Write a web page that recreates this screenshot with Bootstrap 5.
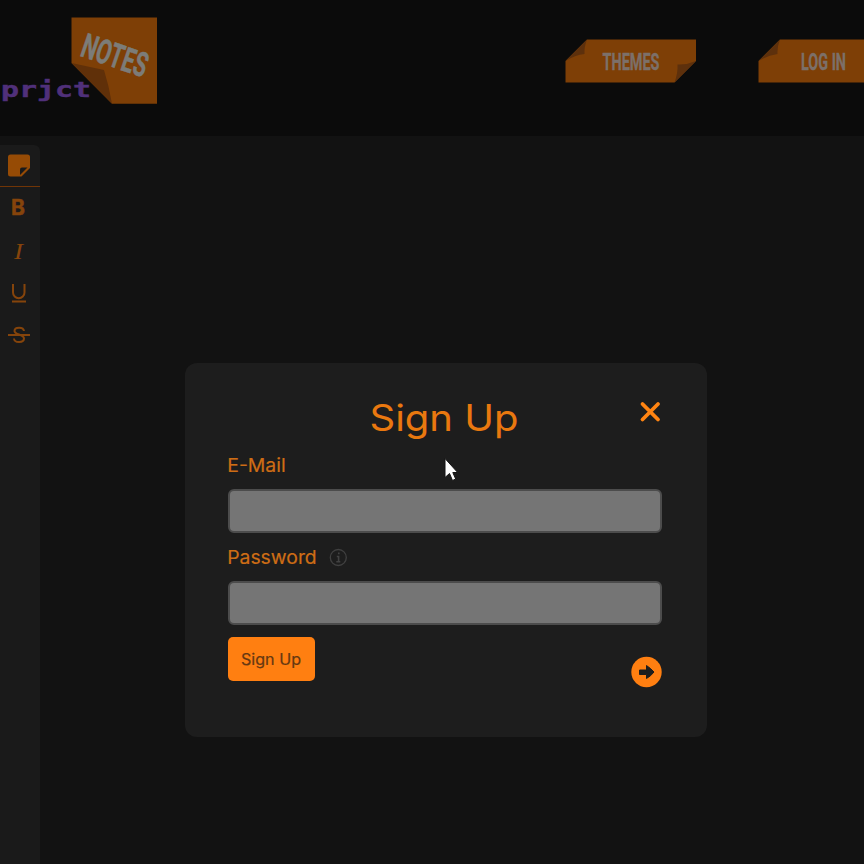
<!DOCTYPE html>
<html lang="en">
<head>
<meta charset="utf-8">
<meta name="viewport" content="width=device-width, initial-scale=1">
<title>Notes prjct</title>
<link href="https://cdn.jsdelivr.net/npm/bootstrap@5.3.0/dist/css/bootstrap.min.css" rel="stylesheet">
<style>
body{background:#121212;height:100vh;overflow:hidden;font-family:Inter,"Liberation Sans",sans-serif}
svg{display:block;flex-shrink:0;overflow:visible}
.topbar{height:136px;background:#0b0b0b}
.topbar .brand-logo{width:160px}
.nav-tags{gap:62px;padding-top:39px}
.tools{width:40px;height:719px;background:#1a1a1a;border-top-right-radius:6px;margin-top:9px}
.tools .tool{height:42.3px;background:none;border:0;padding:0 0 0 7px;width:40px}
.tools .tool:first-child{border-bottom:1px solid #713506}
.dialog-layer{padding:363px 0 0 185px}
.signup{width:522px;height:374px;background:#1d1d1d;border-radius:12px;padding:28px 45px 0 42.500px}
.signup .field{height:44px;background:#757575;border:2px solid #4c4c4c;border-radius:6px;padding:0 10px}
.signup .send{width:87px;height:44px;background:#ff7f11;border-radius:5px;border:0;padding:0}
.pointer{left:444px;top:457px}
.cond{font-family:Roboto,"Liberation Sans",sans-serif;font-weight:700}
</style>
<script src="https://cdn.jsdelivr.net/npm/bootstrap@5.3.0/dist/js/bootstrap.bundle.min.js"></script>
</head>
<body>
<header class="topbar d-flex justify-content-between align-items-start">
  <a class="brand-logo" href="#" aria-label="Notes prjct">
    <svg width="160" height="136" viewBox="0 0 160 136">
      <path d="M71.500 17.500H157V103.700H112L71.500 63Z" fill="#7e3f06"/>
      <path d="M71.500 63L104 70Q109 86 112 103.700Z" fill="#603009"/>
      <text class="cond" transform="translate(79 55.500) rotate(19)" font-size="34" fill="#7c7c78" stroke="#7c7c78" stroke-width=".5" textLength="68" lengthAdjust="spacingAndGlyphs">NOTES</text>
      <text x="1" y="97" font-family="DejaVu Sans Mono,monospace" font-weight="700" font-size="22" fill="#50307a" stroke="#50307a" stroke-width=".5" textLength="90" lengthAdjust="spacingAndGlyphs">prjct</text>
    </svg>
  </a>
  <nav class="nav-tags d-flex" aria-label="Main">
    <a href="#"><svg width="131" height="44" viewBox="0 0 131 44">
      <path d="M22 .5H131V22L109.500 43.500H.5V22Z" fill="#7e3f06"/>
      <path d="M22 .5Q19 8 19.500 15Q10 16 .5 22ZM131 22Q122 26 112.500 25.500Q113 34 109.500 43.500Z" fill="#5d300c"/>
      <text class="cond" x="37.500" y="31" font-size="24.500" fill="#7c7069" stroke="#7c7069" stroke-width=".4" textLength="57" lengthAdjust="spacingAndGlyphs">THEMES</text></svg></a>
    <a href="#"><svg width="106" height="44" viewBox="0 0 106 44">
      <path d="M22 .5H106V43.500H.5V22Z" fill="#7e3f06"/>
      <path d="M22 .5Q19 8 19.500 15Q10 16 .5 22Z" fill="#5d300c"/>
      <text class="cond" x="43" y="31" font-size="24.500" fill="#7c7069" stroke="#7c7069" stroke-width=".4" textLength="45" lengthAdjust="spacingAndGlyphs">LOG IN</text></svg></a>
  </nav>
</header>

<aside class="tools d-flex flex-column">
  <button class="tool" aria-label="Note"><svg width="24" height="24" viewBox="0 0 24 24"><path d="M3.500 .5H20.500Q23 .5 23 3V14L14.500 22.500H3.500Q1 22.500 1 20V3Q1 .5 3.500 .5Z" fill="#964b05"/><path d="M20.500 13.500H15Q13 13.500 13 15.500V21Z" fill="#1a1a1a"/></svg></button>
  <button class="tool" aria-label="Bold"><svg width="24" height="24" viewBox="0 0 24 24"><text x="4" y="19" font-size="21" font-weight="700" fill="#85440b" stroke="#85440b" stroke-width=".5">B</text></svg></button>
  <button class="tool" aria-label="Italic"><svg width="24" height="24" viewBox="0 0 24 24"><text x="7" y="19.500" font-family="Liberation Serif,serif" font-style="italic" font-size="24" fill="#85440b" textLength="9" lengthAdjust="spacingAndGlyphs">I</text></svg></button>
  <button class="tool" aria-label="Underline"><svg width="24" height="24" viewBox="0 0 24 24" fill="none" stroke="#85440b" stroke-width="2"><path d="M6 3V11.500A5.700 5.700 0 0 0 17.500 11.500V3M5 20.500H19"/></svg></button>
  <button class="tool" aria-label="Strikethrough"><svg width="24" height="24" viewBox="0 0 24 24" fill="none" stroke="#85440b" stroke-width="2"><path d="M17 8C16.500 3.500 7.500 3.500 7.500 8C7.500 12 17 11 17 15.500C17 20 7.500 20.500 7 15.500M1 12H23"/></svg></button>
</aside>

<div class="dialog-layer position-fixed top-0 start-0">
  <form class="signup">
    <div class="d-flex justify-content-end">
      <svg width="290" height="64" viewBox="0 0 290 64" role="heading" aria-level="1">
        <text x="-2.500" y="40" font-size="37" font-weight="400" fill="#e9780f" textLength="149" lengthAdjust="spacingAndGlyphs">Sign Up</text>
        <path d="M270.500 13L286 28.500M286 13L270.500 28.500" stroke="#ff8412" stroke-width="3.800" stroke-linecap="round"/>
      </svg>
    </div>
    <label class="d-block" for="email"><svg width="434" height="34" viewBox="0 0 434 34"><text x="-.8" y="16.500" font-size="18.500" fill="#ce6d15" stroke="#ce6d15" stroke-width=".2" textLength="58.500" lengthAdjust="spacingAndGlyphs">E-Mail</text></svg></label>
    <input id="email" type="email" class="field d-block w-100">
    <label class="d-block" for="pw"><svg width="434" height="48" viewBox="0 0 434 48">
      <text x="-.8" y="31" font-size="18.500" fill="#ce6d15" stroke="#ce6d15" stroke-width=".2" textLength="89.500" lengthAdjust="spacingAndGlyphs">Password</text>
      <circle cx="110.300" cy="24.500" r="8" fill="none" stroke="#404040" stroke-width="1.300"/><path d="M110.800 19.500V21.300M108.800 23.500H110.600V28.500M108.300 28.700H112.300" fill="none" stroke="#424242" stroke-width="1.600"/></svg></label>
    <input id="pw" type="password" class="field d-block w-100">
    <div class="d-flex justify-content-between pt-2 mt-1">
      <button type="button" class="send btn"><svg width="87" height="44" viewBox="0 0 87 44"><text x="13" y="27.500" font-size="15.500" fill="#653812" stroke="#653812" stroke-width=".2" textLength="60" lengthAdjust="spacingAndGlyphs">Sign Up</text></svg></button>
      <svg class="mt-3 pt-1" width="31" height="35" viewBox="0 0 31 31"><circle cx="15.500" cy="15" r="15.200" fill="#ff7f11"/><path d="M8.500 13H15.500V8.500Q20 11.500 23 15Q20 19 15.500 21.500V17.500H8.500Z" fill="#1d1d1d" stroke="#1d1d1d" stroke-linejoin="round"/></svg>
    </div>
  </form>
</div>
<svg class="pointer position-fixed" width="15" height="25" viewBox="0 0 15 25"><path d="M1 1.500V20.500L5.500 16.500L8.500 23.500L11.700 22L8.800 15.500H13.700Z" fill="#fff" stroke="#151515" stroke-width="1"/></svg>
</body>
</html>
